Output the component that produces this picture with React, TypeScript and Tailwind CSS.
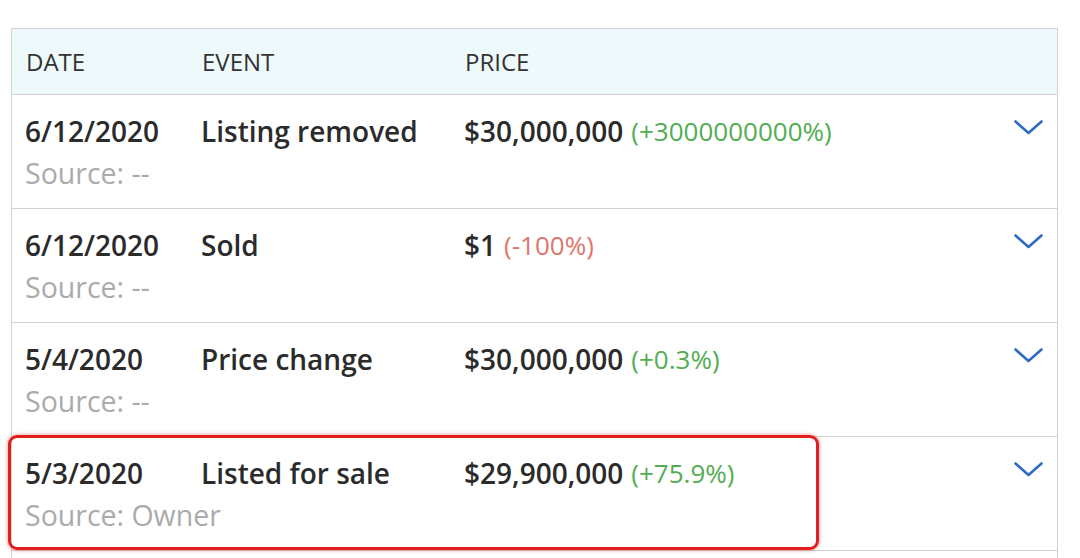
import React from "react";

type Row = {
  date: string;
  event: string;
  price: string;
  change: string;
  up: boolean;
  source: string;
  highlight?: boolean;
};

const rows: Row[] = [
  { date: "6/12/2020", event: "Listing removed", price: "$30,000,000", change: "(+3000000000%)", up: true, source: "Source: --" },
  { date: "6/12/2020", event: "Sold", price: "$1", change: "(-100%)", up: false, source: "Source: --" },
  { date: "5/4/2020", event: "Price change", price: "$30,000,000", change: "(+0.3%)", up: true, source: "Source: --" },
  { date: "5/3/2020", event: "Listed for sale", price: "$29,900,000", change: "(+75.9%)", up: true, source: "Source: Owner", highlight: true },
];

function Chevron() {
  return (
    <svg width="29" height="15" viewBox="0 0 29 15" fill="none" className="block">
      <path d="M1.5 1.5 L14.5 13 L27.5 1.5" stroke="#2f6cbf" strokeWidth="2.6" strokeLinecap="round" strokeLinejoin="round" />
    </svg>
  );
}

export default function App() {
  return (
    <div className="w-[1080px] h-[558px] overflow-hidden bg-white pt-[28px] pl-[11px]" style={{ fontFamily: '"Open Sans", "Noto Sans", sans-serif' }}>
      <div className="w-[1047px] border border-[#d3d3d3] border-b-0">
        <div className="grid grid-cols-[176px_263px_1fr] items-center h-[66px] bg-[#eef9fb] border-b border-[#d3d3d3] pl-[14px] text-[24px] text-[#333]">
          <div>DATE</div>
          <div>EVENT</div>
          <div>PRICE</div>
        </div>
        {rows.map((r, i) => (
          <div key={i} className="relative border-b border-[#d3d3d3]">
            <div className="grid grid-cols-[176px_263px_1fr] pl-[13px] pt-[15px] pb-[14px]">
              <div className="text-[28px] leading-[42px] font-semibold text-[#2b2b2b]">{r.date}</div>
              <div className="text-[28px] leading-[42px] font-semibold text-[#2b2b2b]">{r.event}</div>
              <div className="text-[28px] leading-[42px] text-[#2b2b2b] flex items-center">
                <span className="font-semibold">{r.price}</span>
                <span className={"ml-[8px] font-normal text-[26px] " + (r.up ? "text-[#52ad52]" : "text-[#df766c]")}>{r.change}</span>
              </div>
              <div className="col-span-3 text-[28.5px] leading-[42px] text-[#ababab]">{r.source}</div>
            </div>
            <div className="absolute right-[14px] top-[25px]">
              <Chevron />
            </div>
            {r.highlight && (
              <div className="absolute left-[-4px] top-[-2px] w-[811px] h-[115px] rounded-[9px] border-[3px] border-[#e21f1f] shadow-[0_0_4px_rgba(200,0,0,0.45)]" />
            )}
          </div>
        ))}
        <div className="h-[40px]" />
      </div>
    </div>
  );
}
